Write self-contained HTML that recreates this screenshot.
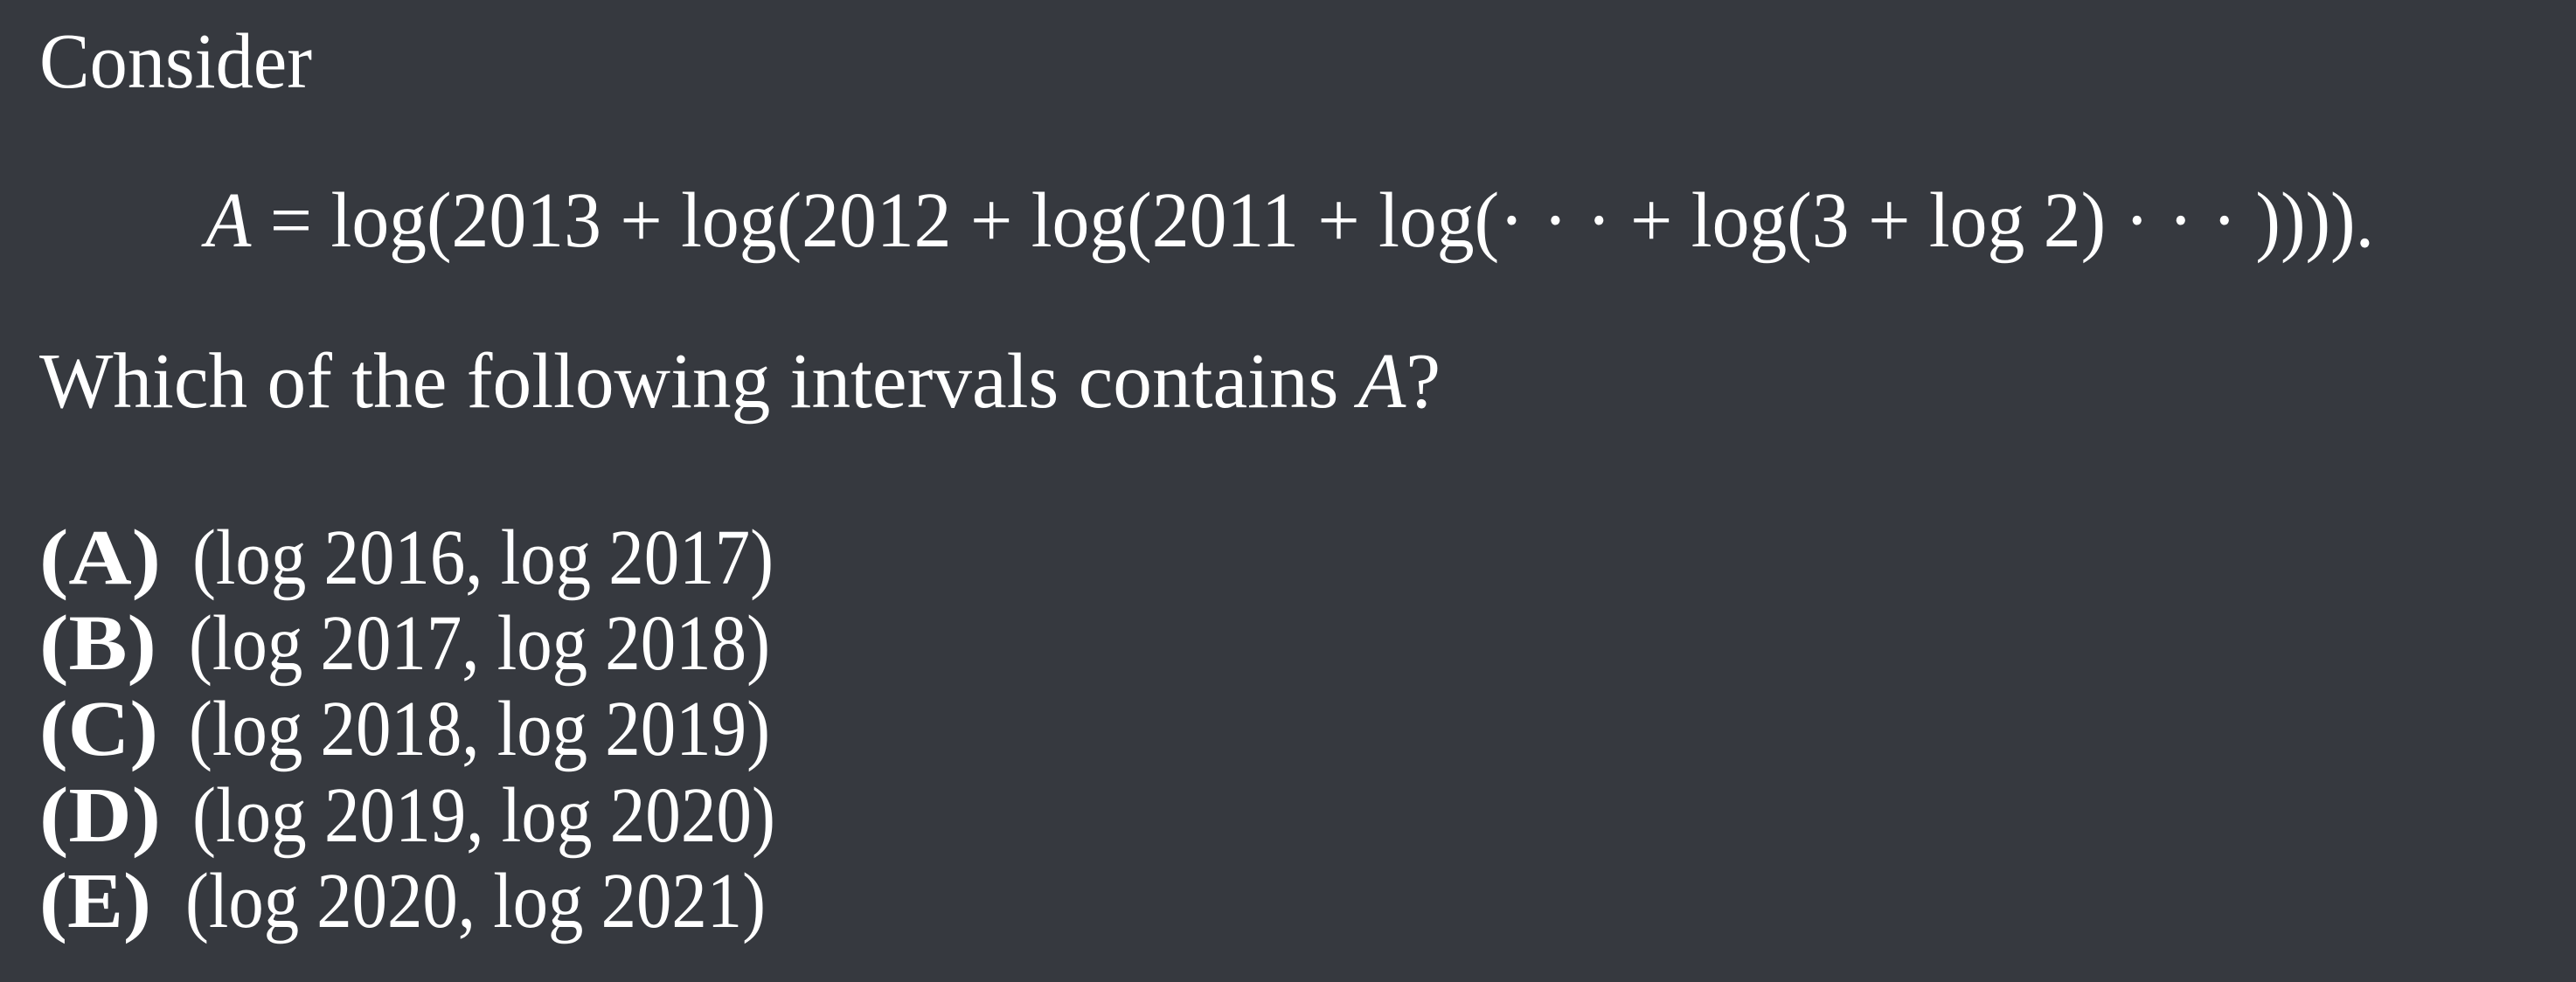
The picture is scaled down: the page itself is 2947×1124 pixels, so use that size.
<!DOCTYPE html>
<html><head><meta charset="utf-8"><style>
html,body{margin:0;padding:0;background:#36393f;width:2947px;height:1124px;overflow:hidden}
svg{display:block}
text{font-family:"Liberation Serif",serif;fill:#ffffff;font-size:90px}
</style></head><body>
<svg width="2947" height="1124" viewBox="0 0 2947 1124">
<rect width="2947" height="1124" fill="#36393f"/>
<text x="45" y="100" textLength="312" lengthAdjust="spacingAndGlyphs">Consider</text>
<text x="235" y="282" textLength="2481" lengthAdjust="spacingAndGlyphs"><tspan font-style="italic">A</tspan>  =  log(2013  +  log(2012  +  log(2011  +  log(· · ·  +  log(3  +  log 2) · · · )))).</text>
<text x="45" y="466" textLength="1603" lengthAdjust="spacingAndGlyphs">Which of the following intervals contains <tspan font-style="italic">A</tspan>?</text>

<text x="45" y="668" font-weight="bold" textLength="139" lengthAdjust="spacingAndGlyphs">(A)</text>
<text x="220" y="668" textLength="665" lengthAdjust="spacingAndGlyphs">(log 2016, log 2017)</text>

<text x="45" y="766" font-weight="bold" textLength="134" lengthAdjust="spacingAndGlyphs">(B)</text>
<text x="216" y="766" textLength="665" lengthAdjust="spacingAndGlyphs">(log 2017, log 2018)</text>

<text x="45" y="864" font-weight="bold" textLength="136" lengthAdjust="spacingAndGlyphs">(C)</text>
<text x="216" y="864" textLength="665" lengthAdjust="spacingAndGlyphs">(log 2018, log 2019)</text>

<text x="45" y="963" font-weight="bold" textLength="139" lengthAdjust="spacingAndGlyphs">(D)</text>
<text x="220" y="963" textLength="667" lengthAdjust="spacingAndGlyphs">(log 2019, log 2020)</text>

<text x="45" y="1061" font-weight="bold" textLength="128" lengthAdjust="spacingAndGlyphs">(E)</text>
<text x="212" y="1061" textLength="664" lengthAdjust="spacingAndGlyphs">(log 2020, log 2021)</text>
</svg>
</body></html>
